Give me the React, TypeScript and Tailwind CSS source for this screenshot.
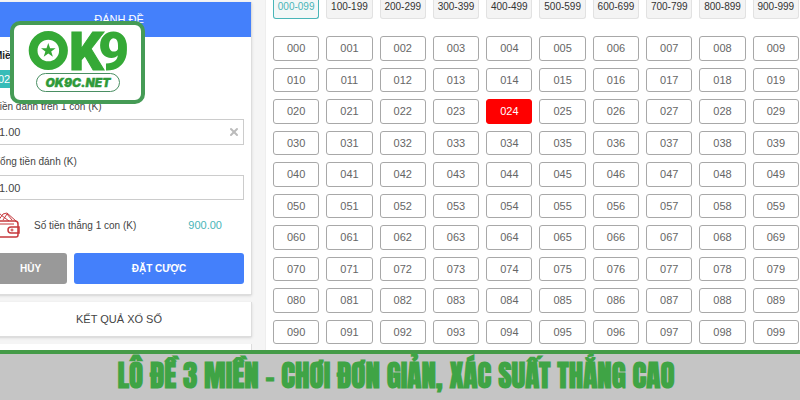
import React, { useState } from 'react';
import { X } from 'lucide-react';

const ranges = Array.from({ length: 10 }, (_, i) => `${i}00-${i}99`);
const numbers = Array.from({ length: 100 }, (_, i) => String(i).padStart(3, '0'));

const Logo: React.FC = () => (
  <svg viewBox="0 0 127 75" className="h-full w-full" role="img" aria-label="OK9">
    <g fill="#35a936" className="font-['Roboto',sans-serif] text-[54px] font-black">
      <text x="55" y="45" stroke="#35a936" strokeWidth="1">K</text>
      <text x="84" y="45" stroke="#fff" strokeWidth="2" paintOrder="stroke">9</text>
    </g>
    <circle cx="34.300" cy="25.500" r="15.200" fill="none" stroke="#35a936" strokeWidth="8.800" />
    <path
      fill="#35a936"
      d="M34.300 18l1.800 5.200h5.500l-4.400 3.300 1.700 5.300-4.600-3.200-4.600 3.200 1.700-5.300-4.400-3.300h5.500z"
    />
    <rect x="22.500" y="48.500" width="83" height="18" rx="9" fill="#fff" stroke="#4a8f63" />
    <text
      x="64"
      y="62"
      textAnchor="middle"
      fill="#2f9a3a"
      stroke="#2f9a3a"
      strokeWidth="0.400"
      className="font-['Inter',sans-serif] text-[12px] font-black italic"
    >
      OK9C.NET
    </text>
  </svg>
);

const WalletIcon: React.FC = () => (
  <svg viewBox="1 0 28 28" fill="none" stroke="#c6383d" className="h-7 w-7 shrink-0">
    <path strokeWidth="1.500" d="M2 10h20a3 3 0 013 3v11a2 2 0 01-2 2H2" />
    <path strokeWidth="1.500" d="M26 16h-8a3 3 0 000 6h8z" />
    <path d="M5 10l5-7 4-1 9 8M8 4l8 6M10 9l4-6 5 6M2 7l6-4M5 13h16" />
    <circle cx="19" cy="19" r="1" />
  </svg>
);

export default function App() {
  const [range, setRange] = useState('000-099');
  const [picked, setPicked] = useState('024');
  const [stake, setStake] = useState('1.00');

  return (
    <div className="relative flex min-h-screen flex-col overflow-hidden bg-[#f5f5f5] font-['Liberation_Sans',sans-serif] text-[10px] text-[#444]">
      <main className="flex flex-1">
        <aside className="-ml-[13px] flex w-[265px] shrink-0 flex-col gap-[7px] pt-[2px]">
          <section className="border-r border-b border-[#ddd] bg-white shadow-sm">
            <h1 className="flex h-[35px] items-center justify-center bg-[#4480fb] text-[11px] text-white">
              ĐÁNH ĐỀ
            </h1>
            <div className="flex flex-col px-[7px] pt-2 pb-[10px]">
              <p className="h-[22px] leading-[22px] font-bold text-[#222]">Miền</p>
              <p className="mt-[3px] flex h-[18px] w-[60px] items-center bg-[#36bcb8] px-1 text-[11px] text-white">024</p>
              <label htmlFor="stake" className="mt-[7px] h-[24px] leading-[24px]">
                Tiền đánh trên 1 con (K)
              </label>
              <div className="relative">
                <input
                  id="stake"
                  value={stake}
                  onChange={(e) => setStake(e.target.value)}
                  className="block h-[26px] w-full border border-[#ccc] bg-white px-1 text-[11px]"
                />
                <button
                  type="button"
                  aria-label="Xóa"
                  onClick={() => setStake('')}
                  className="absolute inset-y-0 right-1 flex items-center text-[#bbb]"
                >
                  <X className="h-3 w-3" strokeWidth={4} />
                </button>
              </div>
              <label htmlFor="total" className="mt-1 h-[26px] leading-[26px]">
                Tổng tiền đánh (K)
              </label>
              <input
                id="total"
                value={stake}
                readOnly
                className="block h-[25px] w-full border border-[#ccc] bg-white px-1 text-[11px]"
              />
              <div className="mt-[10px] flex h-[30px] items-center">
                <WalletIcon />
                <span className="ml-3">Số tiền thắng 1 con (K)</span>
                <span className="mr-[22px] ml-auto text-[11px] text-[#49b5b8]">900.00</span>
              </div>
              <div className="mt-[13px] flex gap-[7px] font-bold text-white">
                <button type="button" className="h-[31px] w-[73px] rounded-[3px] bg-[#999]">
                  HỦY
                </button>
                <button type="button" className="h-[31px] flex-1 rounded-[3px] bg-[#4480fb]">
                  ĐẶT CƯỢC
                </button>
              </div>
            </div>
          </section>
          <section className="border-r border-b border-[#ddd] bg-white shadow-sm">
            <h2 className="flex h-[34px] items-center justify-center text-[11px]">KẾT QUẢ XỔ SỐ</h2>
          </section>
          <section className="flex-1 border-r border-[#ddd] bg-white" />
        </aside>

        <section className="ml-[13px] flex flex-1 flex-col border-l border-[#eee] bg-white pr-px pb-[6px] pl-[7px]">
          <div className="grid grid-cols-10 gap-[7px]">
            {ranges.map((r) => (
              <button
                key={r}
                type="button"
                onClick={() => setRange(r)}
                className={`flex h-[19px] justify-center rounded-b-[3px] border border-t-0 leading-[14px] ${
                  r === range ? 'border-[#49b5b8] bg-[#f3f7f7] text-[#49b5b8]' : 'border-[#e2e2e2] bg-[#f4f4f4] text-[#333]'
                }`}
              >
                {r}
              </button>
            ))}
          </div>
          <div className="mt-[17px] grid flex-1 grid-cols-10 gap-[7px] text-[11px]">
            {numbers.map((n) => (
              <button
                key={n}
                type="button"
                onClick={() => setPicked(n)}
                className={`rounded-[3px] border leading-[20px] ${
                  n === picked ? 'border-[#f00] bg-[#f00] text-white' : 'border-[#a8a8a8] bg-white text-[#666]'
                }`}
              >
                {n}
              </button>
            ))}
          </div>
        </section>
      </main>

      <footer className="flex h-[50px] items-center justify-center border-t-4 border-[#459b48] bg-[#c5c5c5] pr-2 font-['Anton',sans-serif] text-[29px] font-bold whitespace-nowrap text-[#3fa445]">
        LÔ ĐỀ 3 MIỀN - CHƠI ĐƠN GIẢN, XÁC SUẤT THẮNG CAO
      </footer>

      <div className="absolute top-[21px] left-[10px] h-[83px] w-[135px] rounded-[10px] border-4 border-[#459b55] bg-white">
        <Logo />
      </div>
    </div>
  );
}
